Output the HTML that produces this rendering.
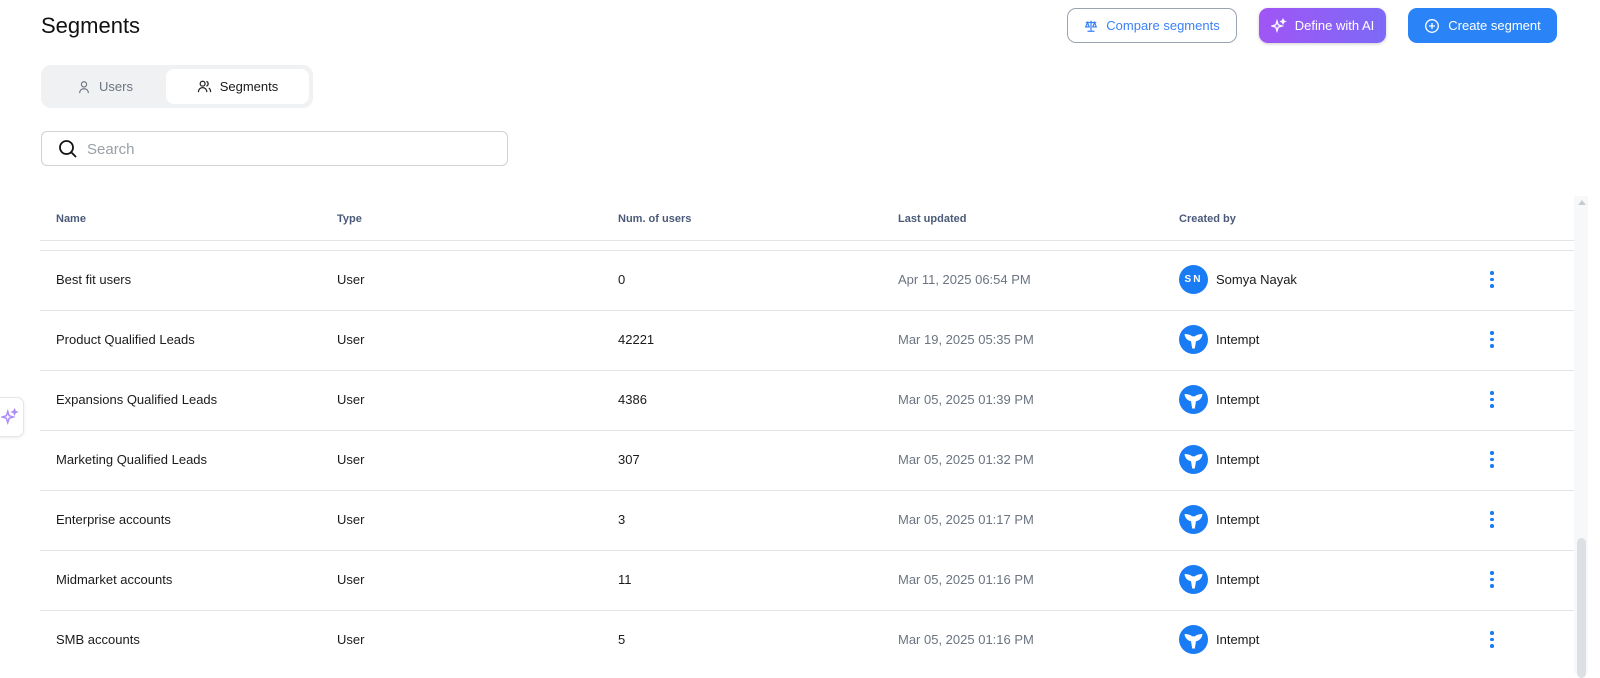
<!DOCTYPE html>
<html><head><meta charset="utf-8"><style>
*{box-sizing:border-box;margin:0;padding:0}
body{width:1600px;height:673px;overflow:hidden;background:#fff;font-family:"Liberation Sans",sans-serif;color:#1a1a1a;position:relative}
.abs{position:absolute}
h1{position:absolute;left:41px;top:13px;font-size:22px;font-weight:400;color:#111}
.btn{position:absolute;top:8px;height:35px;border-radius:9px;font-size:13px;display:flex;align-items:center;justify-content:center;gap:8px}
.tabs{left:41px;top:65px;width:272px;height:43px;background:#f0f1f3;border-radius:10px}
.tab{position:absolute;top:4px;height:35px;display:flex;align-items:center;justify-content:center;gap:8px;font-size:13px}
.search{left:41px;top:131px;width:467px;height:35px;border:1px solid #cfd2d6;border-radius:6px}
.th{position:absolute;top:213px;font-size:11px;color:#4a5a78;font-weight:700}
.line{position:absolute;left:40px;width:1534px;height:1px;background:#e2e4e8}
.row{position:absolute;left:0;width:1574px;height:60px;font-size:13px}
.row span{position:absolute;top:22px}
.av{position:absolute;left:1179px;top:15px;width:29px;height:29px;border-radius:50%;background:#1a7cf5;color:#fff;font-size:10px;font-weight:700;display:flex;align-items:center;justify-content:center;letter-spacing:2px}
.dots{position:absolute;left:1490px;top:21px;width:4px}
.dots i{display:block;width:3.5px;height:3.5px;border-radius:50%;background:#1a7cf5;margin-bottom:3px}
</style></head><body>
<h1>Segments</h1>
<div class="btn" style="left:1067px;width:170px;border:1px solid #9aa3ad;color:#3b82f6">
<svg width="14" height="14" viewBox="0 0 16 16" fill="none" stroke="#3b82f6" stroke-width="1.4"><path d="M8 2v12M4 14h8M2 4h12M4 4l-2 5h4zM12 4l-2 5h4z"/></svg>Compare segments</div>
<div class="btn" style="left:1259px;width:127px;background:linear-gradient(90deg,#a055f5,#7d6af7);color:#fff;box-shadow:0 1px 3px rgba(0,0,0,.2)">
<svg width="16" height="16" viewBox="0 0 16 16" fill="none" stroke="#fff" stroke-width="1.3"><path d="M6 3l1.2 3.8L11 8l-3.8 1.2L6 13l-1.2-3.8L1 8l3.8-1.2z"/><path d="M12 1.5l.6 1.4 1.4.6-1.4.6-.6 1.4-.6-1.4-1.4-.6 1.4-.6z"/></svg>Define with AI</div>
<div class="btn" style="left:1408px;width:149px;background:#2b84f7;color:#fff">
<svg width="16" height="16" viewBox="0 0 16 16" fill="none" stroke="#fff" stroke-width="1.3"><circle cx="8" cy="8" r="6.3"/><path d="M8 5v6M5 8h6"/></svg>Create segment</div>

<div class="abs tabs">
<div class="tab" style="left:4px;width:120px;color:#6b7480"><svg width="14" height="14" viewBox="0 0 16 16" fill="none" stroke="#6b7480" stroke-width="1.3"><circle cx="8" cy="5" r="3"/><path d="M3 15c0-3 2-5 5-5s5 2 5 5"/></svg>Users</div>
<div class="tab" style="left:125px;width:143px;background:#fff;border-radius:8px;color:#1a1a1a"><svg width="15" height="15" viewBox="0 0 16 16" fill="none" stroke="#222" stroke-width="1.3"><circle cx="6" cy="5" r="2.6"/><path d="M1.5 14c0-3 2-4.8 4.5-4.8s4.5 1.8 4.5 4.8"/><path d="M10 2.6a2.6 2.6 0 010 5M12.5 9.6c1.3.7 2 2.2 2 4.4"/></svg>Segments</div>
</div>

<div class="abs search"><svg style="position:absolute;left:16px;top:7px" width="20" height="20" viewBox="0 0 20 20" fill="none" stroke="#111" stroke-width="1.8"><circle cx="8.5" cy="8.5" r="6.5"/><path d="M13.5 13.5l4.5 4.5"/></svg><span style="position:absolute;left:45px;top:9px;font-size:15px;color:#9aa0a6">Search</span></div>

<div class="th" style="left:56px">Name</div>
<div class="th" style="left:337px">Type</div>
<div class="th" style="left:618px">Num. of users</div>
<div class="th" style="left:898px">Last updated</div>
<div class="th" style="left:1179px">Created by</div>
<div class="line" style="top:240px"></div>

<div class="abs" style="left:1574px;top:196px;width:14px;height:477px;background:#f7f8f9"></div>
<div class="abs" style="left:1578px;top:200px;width:0;height:0;border-left:4px solid transparent;border-right:4px solid transparent;border-bottom:5px solid #c8ccd1"></div>
<div class="abs" style="left:1577px;top:538px;width:9px;height:140px;background:#dcdfe3;border-radius:5px"></div>

<div class="abs" style="left:-6px;top:397px;width:30px;height:40px;border:1px solid #e4e6ea;border-radius:7px;background:#fff;box-shadow:0 1px 3px rgba(0,0,0,.08)"><svg style="position:absolute;left:6px;top:10px" width="18" height="18" viewBox="0 0 16 16" fill="none" stroke="#a98af7" stroke-width="1.3"><path d="M6 3l1.2 3.8L11 8l-3.8 1.2L6 13l-1.2-3.8L1 8l3.8-1.2z"/><path d="M12 1.5l.6 1.4 1.4.6-1.4.6-.6 1.4-.6-1.4-1.4-.6 1.4-.6z"/></svg></div>

<div id="rows"></div>
<script>
const d=[["Best fit users","0","Apr 11, 2025 06:54 PM",1],["Product Qualified Leads","42221","Mar 19, 2025 05:35 PM"],["Expansions Qualified Leads","4386","Mar 05, 2025 01:39 PM"],["Marketing Qualified Leads","307","Mar 05, 2025 01:32 PM"],["Enterprise accounts","3","Mar 05, 2025 01:17 PM"],["Midmarket accounts","11","Mar 05, 2025 01:16 PM"],["SMB accounts","5","Mar 05, 2025 01:16 PM"]];
const whale='<svg width="29" height="29" viewBox="0 0 29 29"><circle cx="14.5" cy="14.5" r="14.5" fill="#1a7cf5"/><path d="M5.5 9c3 0 6 .8 8 2.5 .5-.3 1.5-.3 2 0 2-1.7 5-2.5 8-2.5-.5 4-3 6.5-6.5 7.3l-1.2 7.2h-2.6l-1.2-7.2C8.5 15.5 6 13 5.5 9z" fill="#fff"/></svg>';
let h='';d.forEach((r,i)=>{const t=250+i*60;
h+=`<div class="line" style="top:${t}px"></div><div class="row" style="top:${t}px"><span style="left:56px">${r[0]}</span><span style="left:337px">User</span><span style="left:618px">${r[1]}</span><span style="left:898px;color:#6b7480">${r[2]}</span>`+
(r[3]?'<div class="av">SN</div><span style="left:1216px">Somya Nayak</span>':'<div class="av" style="background:none">'+whale+'</div><span style="left:1216px">Intempt</span>')+
'<div class="dots"><i></i><i></i><i></i></div></div>';});
document.getElementById('rows').innerHTML=h;
</script>
</body></html>
